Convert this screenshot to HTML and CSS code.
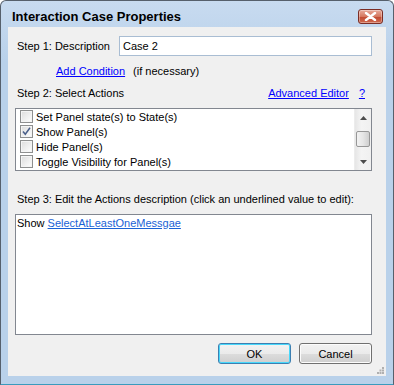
FILE: index.html
```html
<!DOCTYPE html>
<html>
<head>
<meta charset="utf-8">
<link rel="stylesheet" href="styles.css">
</head>
<body>
<div class="window">
  <div class="titlebar">
    <span class="title">Interaction Case Properties</span>
    <span class="close">
      <svg width="13" height="9" viewBox="0 0 13 9"><path d="M2 1 L11 8 M11 1 L2 8" stroke="#fff" stroke-width="2.4" stroke-linecap="round"/></svg>
    </span>
  </div>
  <div class="client">
    <div class="row row1">
      <span class="label1">Step 1: Description</span>
      <div class="input">Case 2</div>
    </div>
    <div class="row row2">
      <a class="link">Add Condition</a>
      <span class="hint">(if necessary)</span>
    </div>
    <div class="row row3">
      <span>Step 2: Select Actions</span>
      <span class="spacer"></span>
      <a class="link">Advanced Editor</a>
      <a class="link qm">?</a>
    </div>
    <div class="listbox">
      <div class="items">
        <div class="item"><span class="cb"></span><span>Set Panel state(s) to State(s)</span></div>
        <div class="item"><span class="cb"><svg width="11" height="11" viewBox="0 0 11 11"><path d="M2 5.5 L4.3 8.3 L9 1.8" fill="none" stroke="#4a5f8a" stroke-width="1.5"/></svg></span><span>Show Panel(s)</span></div>
        <div class="item"><span class="cb"></span><span>Hide Panel(s)</span></div>
        <div class="item"><span class="cb"></span><span>Toggle Visibility for Panel(s)</span></div>
      </div>
      <div class="scrollbar">
        <div class="arrow"><svg width="7" height="4" viewBox="0 0 7 4"><path d="M0 4 L3.5 0 L7 4 Z" fill="#4d4d4d"/></svg></div>
        <div class="thumb"></div>
        <div class="arrow"><svg width="7" height="4" viewBox="0 0 7 4"><path d="M0 0 L3.5 4 L7 0 Z" fill="#4d4d4d"/></svg></div>
      </div>
    </div>
    <div class="row row4">Step 3: Edit the Actions description (click an underlined value to edit):</div>
    <div class="desc">Show <a class="link2">SelectAtLeastOneMessgae</a></div>
    <div class="buttons">
      <div class="btn ok">OK</div>
      <div class="btn">Cancel</div>
    </div>
    <svg class="grip" width="7" height="7" viewBox="0 0 7 7">
      <rect x="5" y="0" width="2" height="2" fill="#b0b0b0"/>
      <rect x="5" y="2.5" width="2" height="2" fill="#b0b0b0"/>
      <rect x="2.5" y="2.5" width="2" height="2" fill="#b0b0b0"/>
      <rect x="5" y="5" width="2" height="2" fill="#b0b0b0"/>
      <rect x="2.5" y="5" width="2" height="2" fill="#b0b0b0"/>
      <rect x="0" y="5" width="2" height="2" fill="#b0b0b0"/>
    </svg>
  </div>
</div>
</body>
</html>
```

FILE: styles.css
```css
html, body {
  margin: 0;
  padding: 0;
  width: 394px;
  height: 385px;
  overflow: hidden;
  background: #ffffff;
}
.window {
  width: 394px;
  height: 385px;
  box-sizing: border-box;
  border: 1px solid #56606c;
  border-bottom-color: #3a9bbd;
  border-radius: 6px 6px 0 0;
  background: linear-gradient(#c8dbf0, #b9d1ea 60px, #b9d1ea);
  display: flex;
  flex-direction: column;
  font-family: "Liberation Sans", Arial, sans-serif;
  font-size: 11px;
  color: #000;
}
.titlebar {
  height: 26px;
  flex: none;
  display: flex;
  align-items: flex-start;
  padding: 0 10px 0 11px;
}
.title {
  font-weight: bold;
  font-size: 13px;
  line-height: 16px;
  margin-top: 8px;
  color: #000;
}
.close {
  margin-left: auto;
  margin-top: 8px;
  width: 25px;
  height: 15px;
  box-sizing: border-box;
  border: 1px solid #7b2d25;
  border-radius: 3px;
  background: linear-gradient(#e8ab9c, #d5775f 50%, #c24b33 55%, #cf6a4f);
  display: flex;
  align-items: center;
  justify-content: center;
  box-shadow: inset 0 0 0 1px rgba(255,255,255,0.35);
}
.close svg { display: block; }
.client {
  flex: 1;
  margin: 0 7px 8px 7px;
  background: #f0f0f0;
  position: relative;
  display: flex;
  flex-direction: column;
  padding: 0 14px 0 7px;
}
.row {
  display: flex;
  align-items: center;
  line-height: 13px;
}
.row1 {
  margin-top: 9px;
  height: 20px;
  padding-left: 2px;
}
.label1 {
  width: 102px;
}
.input {
  width: 253px;
  height: 20px;
  box-sizing: border-box;
  border: 1px solid #a9bdd3;
  background: #fff;
  padding: 2px 0 0 3px;
  font-size: 11px;
  line-height: 14px;
}
.row2 {
  margin-top: 9px;
  padding-left: 41px;
}
.link {
  color: #0000ff;
  text-decoration: underline;
}
.hint { margin-left: 8px; }
.row3 {
  margin-top: 9px;
  padding-left: 2px;
}
.spacer { flex: 1; }
.qm { margin-left: 10px; margin-right: 7px; }
.listbox {
  margin-top: 8px;
  height: 63px;
  box-sizing: border-box;
  border: 1px solid #828790;
  background: #fff;
  display: flex;
}
.items {
  flex: 1;
  display: flex;
  flex-direction: column;
}
.item {
  height: 15px;
  display: flex;
  align-items: center;
  padding-left: 4px;
}
.cb {
  width: 13px;
  height: 13px;
  box-sizing: border-box;
  border: 1px solid #8e8f8f;
  background: linear-gradient(135deg, #dcdcdc, #f4f4f4 70%, #fff);
  box-shadow: inset 0 0 0 1px #f4f4f4;
  margin-right: 3px;
  display: flex;
  align-items: center;
  justify-content: center;
}
.cb svg { display: block; }
.scrollbar {
  width: 17px;
  display: flex;
  flex-direction: column;
  background: linear-gradient(90deg, #e6e6e6, #f4f4f4 40%, #f0f0f0);
  border-left: 1px solid #ececec;
  box-sizing: border-box;
}
.arrow {
  height: 17px;
  display: flex;
  align-items: center;
  justify-content: center;
}
.thumb {
  margin: 5px 1px 0 1px;
  height: 16px;
  box-sizing: border-box;
  border: 1px solid #979797;
  border-radius: 2px;
  background: linear-gradient(90deg, #f2f2f2, #e6e6e6 50%, #cfcfcf);
  flex: none;
}
.scrollbar .arrow:last-child { margin-top: auto; }
.row4 {
  margin-top: 22px;
  padding-left: 2px;
}
.desc {
  margin-top: 8px;
  height: 121px;
  box-sizing: border-box;
  border: 1px solid #828790;
  background: #fff;
  padding: 2px 0 0 1px;
  line-height: 13px;
}
.link2 {
  color: #1a62d6;
  text-decoration: underline;
}
.buttons {
  margin-top: 8px;
  display: flex;
  justify-content: flex-end;
  gap: 8px;
}
.btn {
  width: 73px;
  height: 21px;
  box-sizing: border-box;
  border: 1px solid #707070;
  border-radius: 3px;
  background: linear-gradient(#f2f2f2, #ebebeb 50%, #dddddd 51%, #cfcfcf);
  box-shadow: inset 0 0 0 1px #fcfcfc;
  display: flex;
  align-items: center;
  justify-content: center;
  font-size: 11px;
}
.btn.ok {
  border-color: #3c7fb1;
  box-shadow: inset 0 0 0 1px #48d8fb;
}
.grip {
  position: absolute;
  right: 2px;
  bottom: 2px;
}
```
